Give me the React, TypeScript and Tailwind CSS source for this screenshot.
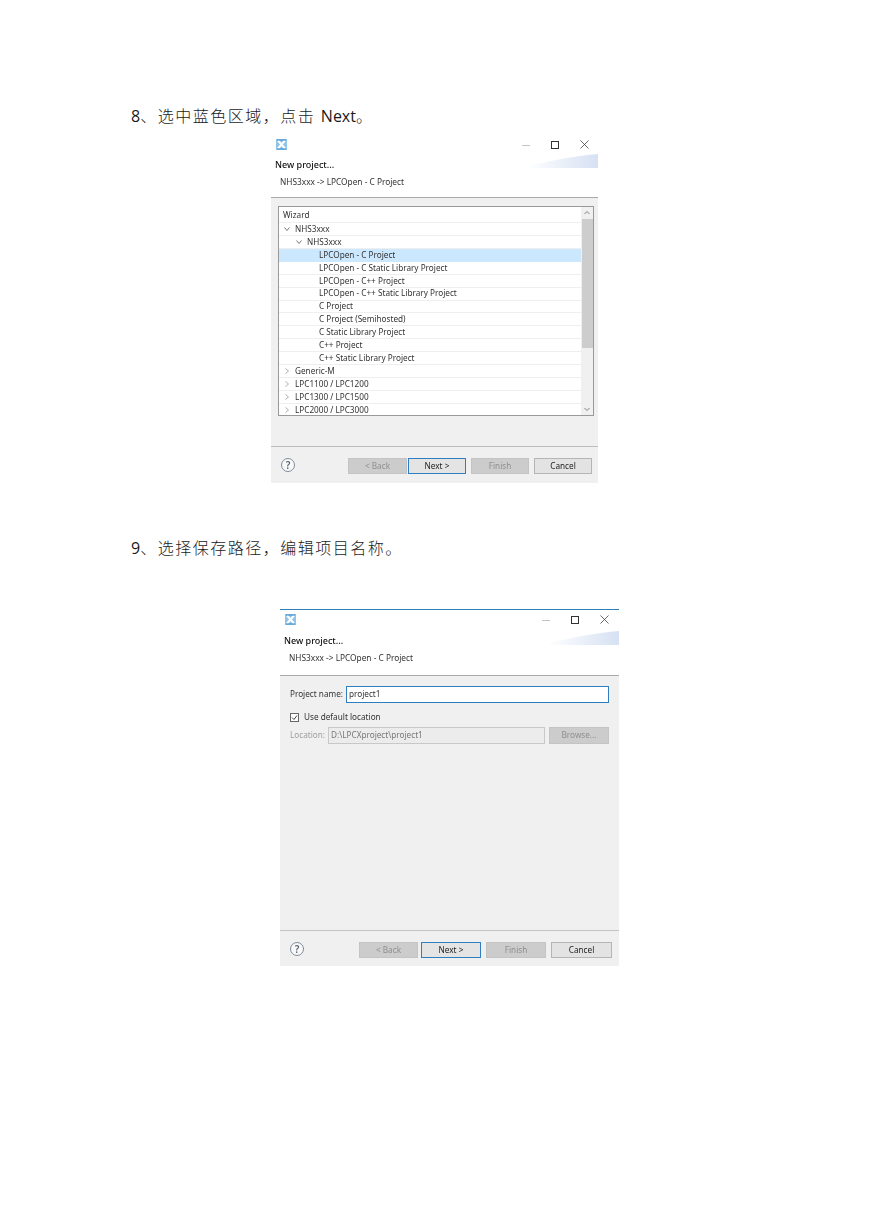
import React from "react";

const uiFont = "font-['Noto_Sans','Noto_Sans_CJK_SC',sans-serif]";

function AppIcon() {
  return (
    <svg width="11" height="11" viewBox="0 0 11 11" className="shrink-0">
      <rect width="11" height="11" fill="#8fc3e8" />
      <path d="M2 1.5 L9 9.5 M9 1.5 L2 9.5" stroke="#fff" strokeWidth="2" />
      <path d="M1 1 H10 M1 10 H10" stroke="#3f8fd0" strokeWidth="1" />
    </svg>
  );
}

function WindowControls({ gapClass }: { gapClass: string }) {
  return (
    <div className={`flex items-center ${gapClass}`}>
      <svg width="8" height="8" viewBox="0 0 8 8"><path d="M0 4.5 H8" stroke="#c4c4c4" strokeWidth="1" /></svg>
      <svg width="8" height="8" viewBox="0 0 8 8"><rect x="0.5" y="0.5" width="7" height="7" fill="none" stroke="#333" strokeWidth="1" /></svg>
      <svg width="9" height="9" viewBox="0 0 9 9"><path d="M0.5 0.5 L8.5 8.5 M8.5 0.5 L0.5 8.5" stroke="#444" strokeWidth="0.8" /></svg>
    </div>
  );
}

function Swoosh({ id, cls }: { id: string; cls: string }) {
  return (
    <svg width="90" height="14" viewBox="0 0 90 14" className={`absolute right-0 ${cls}`}>
      <defs>
        <linearGradient id={id} x1="0" x2="1" y1="0" y2="0">
          <stop offset="0.2" stopColor="#ffffff" />
          <stop offset="1" stopColor="#d6e1f3" />
        </linearGradient>
      </defs>
      <path d="M0 14 C25 13 45 4 90 0 V14 Z" fill={`url(#${id})`} />
    </svg>
  );
}

function Header({ cls, gapCls, swoosh, controls }: { cls: string; gapCls: string; swoosh: React.ReactNode; controls: React.ReactNode }) {
  return (
    <div className={`relative shrink-0 bg-white border-b border-[#a9a9a9] ${cls} ${uiFont}`}>
      {swoosh}
      <div className="flex items-center justify-between h-[19px] px-[5px]">
        <AppIcon />
        {controls}
      </div>
      <div className={`${gapCls} pl-[4px] text-[9px] leading-[12px] font-medium text-[#111]`}>New project...</div>
      <div className="mt-[5px] pl-[9px] text-[8.3px] leading-[12px] text-[#333]">NHS3xxx -&gt; LPCOpen - C Project</div>
    </div>
  );
}

function HelpIcon() {
  return (
    <div className="w-[14px] h-[14px] rounded-full border-[1.5px] border-[#7f8d9b] flex items-center justify-center text-[10px] leading-none font-semibold text-[#5a6a7a] bg-[#f8f8f8] shrink-0">
      ?
    </div>
  );
}

function Btn({ label, cls, kind }: { label: string; cls: string; kind: "off" | "on" | "plain" }) {
  const k =
    kind === "off"
      ? "bg-[#cccccc] border-[#c4c4c4] text-[#8f8f8f]"
      : kind === "on"
      ? "bg-[#e4e4e4] border-[#2f7fc0] text-[#222] border-[1.5px]"
      : "bg-[#e3e3e3] border-[#b5b5b5] text-[#222]";
  return (
    <div className={`h-[16px] border flex items-center justify-center text-[8.2px] leading-none ${k} ${cls}`}>
      {label}
    </div>
  );
}

function Chevron({ open }: { open: boolean }) {
  return (
    <svg width="6" height="6" viewBox="0 0 6 6" className="shrink-0">
      {open ? (
        <path d="M0.5 1.5 L3 4.5 L5.5 1.5" fill="none" stroke="#555" strokeWidth="0.8" />
      ) : (
        <path d="M1.5 0.5 L4.5 3 L1.5 5.5" fill="none" stroke="#9a9a9a" strokeWidth="0.8" />
      )}
    </svg>
  );
}

const rows: { t: string; level: number; open?: boolean; sel?: boolean }[] = [
  { t: "NHS3xxx", level: 0, open: true },
  { t: "NHS3xxx", level: 1, open: true },
  { t: "LPCOpen - C Project", level: 2, sel: true },
  { t: "LPCOpen - C Static Library Project", level: 2 },
  { t: "LPCOpen - C++ Project", level: 2 },
  { t: "LPCOpen - C++ Static Library Project", level: 2 },
  { t: "C Project", level: 2 },
  { t: "C Project (Semihosted)", level: 2 },
  { t: "C Static Library Project", level: 2 },
  { t: "C++ Project", level: 2 },
  { t: "C++ Static Library Project", level: 2 },
  { t: "Generic-M", level: 0, open: false },
  { t: "LPC1100 / LPC1200", level: 0, open: false },
  { t: "LPC1300 / LPC1500", level: 0, open: false },
  { t: "LPC2000 / LPC3000", level: 0, open: false },
];

function TreeRow({ t, level, open, sel }: { t: string; level: number; open?: boolean; sel?: boolean }) {
  const indent = level === 0 ? "pl-[5px]" : level === 1 ? "pl-[17px]" : "pl-[40px]";
  return (
    <div
      className={`h-[12.93px] shrink-0 flex items-center gap-[5px] border-b text-[8.2px] leading-none text-[#333] ${indent} ${
        sel ? "bg-[#cce8ff] border-[#cce8ff]" : "border-[#efefef]"
      }`}
    >
      {level < 2 && <Chevron open={!!open} />}
      <span>{t}</span>
    </div>
  );
}

function Wizard() {
  return (
    <div className={`relative w-[327px] h-[348px] ml-[271px] mt-[8px] bg-[#f0f0f0] flex flex-col blur-[0.3px] ${uiFont}`}>
      <Header
        cls="h-[63px]"
        gapCls="mt-[5px]"
        swoosh={<Swoosh id="sw1" cls="top-[19px]" />}
        controls={<WindowControls gapClass="gap-[21px] pr-[4px]" />}
      />
      <div className="mt-[8px] ml-[7px] w-[316px] h-[210px] border border-[#999999] bg-white flex overflow-hidden shrink-0">
        <div className="w-[302px] flex flex-col">
          <div className="h-[16px] shrink-0 pl-[4px] pt-[2px] flex items-center text-[8.2px] leading-none text-[#333] border-b border-[#efefef]">Wizard</div>
          {rows.map((r, i) => (
            <TreeRow key={i} {...r} />
          ))}
        </div>
        <div className="w-[12px] bg-[#f0f0f0] flex flex-col items-center">
          <div className="h-[12px] flex items-center justify-center">
            <svg width="6" height="6" viewBox="0 0 6 6"><path d="M0.5 4 L3 1.5 L5.5 4" fill="none" stroke="#666" strokeWidth="0.8" /></svg>
          </div>
          <div className="w-[11px] h-[129px] bg-[#cdcdcd]" />
          <div className="flex-1" />
          <div className="h-[12px] flex items-center justify-center">
            <svg width="6" height="6" viewBox="0 0 6 6"><path d="M0.5 2 L3 4.5 L5.5 2" fill="none" stroke="#666" strokeWidth="0.8" /></svg>
          </div>
        </div>
      </div>
      <div className="mt-[30px] border-t border-[#bdbdbd] flex items-start h-[37px] pl-[10px] pt-[11px]">
        <HelpIcon />
        <Btn label="< Back" kind="off" cls="ml-[53px] w-[59px]" />
        <Btn label="Next >" kind="on" cls="ml-[1px] w-[58px]" />
        <Btn label="Finish" kind="off" cls="ml-[5px] w-[58px]" />
        <Btn label="Cancel" kind="plain" cls="ml-[5px] w-[58px]" />
      </div>
    </div>
  );
}

function ProjectForm() {
  return (
    <div className={`relative w-[339px] h-[357px] ml-[280px] mt-[50px] bg-[#f0f0f0] border-t border-[#2f7fb8] flex flex-col blur-[0.3px] ${uiFont}`}>
      <Header
        cls="h-[66px]"
        gapCls="mt-[6px]"
        swoosh={<Swoosh id="sw2" cls="top-[21px]" />}
        controls={<WindowControls gapClass="gap-[21px] pr-[5px]" />}
      />
      <div className="mt-[10px] mx-[10px] flex items-center h-[17px] text-[8.2px] leading-none text-[#333]">
        <span className="w-[56px] shrink-0">Project name:</span>
        <div className="flex-1 h-[17px] bg-white border-[1.5px] border-[#2f7fc0] flex items-center pl-[2px]">project1</div>
      </div>
      <div className="mt-[7px] ml-[10px] flex items-center gap-[5px] h-[14px] text-[8.2px] leading-none text-[#333]">
        <div className="w-[9px] h-[9px] border border-[#666666] bg-white flex items-center justify-center">
          <svg width="7" height="7" viewBox="0 0 7 7"><path d="M1 3.5 L3 5.5 L6 1.5" fill="none" stroke="#333" strokeWidth="0.9" /></svg>
        </div>
        <span>Use default location</span>
      </div>
      <div className="mt-[3px] mx-[10px] flex items-center h-[17px] text-[8.2px] leading-none">
        <span className="w-[38px] shrink-0 text-[#a0a0a0]">Location:</span>
        <div className="w-[217px] h-[17px] bg-[#ececec] border border-[#c8c8c8] flex items-center pl-[2px] text-[#777777]">D:\LPCXproject\project1</div>
        <div className="ml-[4px] w-[60px] h-[17px] bg-[#cccccc] border border-[#c4c4c4] flex items-center justify-center text-[#8f8f8f]">Browse...</div>
      </div>
      <div className="flex-1" />
      <div className="border-t border-[#c4c4c4] flex items-start h-[36px] pl-[10px] pt-[11px]">
        <HelpIcon />
        <Btn label="< Back" kind="off" cls="ml-[55px] w-[59px]" />
        <Btn label="Next >" kind="on" cls="ml-[3px] w-[60px]" />
        <Btn label="Finish" kind="off" cls="ml-[5px] w-[60px]" />
        <Btn label="Cancel" kind="plain" cls="ml-[5px] w-[61px]" />
      </div>
    </div>
  );
}

function Heading({ children, cls }: { children: React.ReactNode; cls: string }) {
  return (
    <div className={`pl-[131px] h-[22px] flex items-center text-[16px] leading-[22px] tracking-[1.5px] font-light text-[#1a1a1a] font-['Open_Sans','Noto_Sans_CJK_SC',sans-serif] ${cls}`}>
      <span>{children}</span>
    </div>
  );
}

function Latin({ children }: { children: React.ReactNode }) {
  return <span className="tracking-normal font-normal">{children}</span>;
}

export default function App() {
  return (
    <div className="w-[869px] h-[1228px] bg-white pt-[105px] overflow-hidden">
      <Heading cls=""><Latin>8</Latin>、选中蓝色区域，点击 <Latin>Next</Latin>。</Heading>
      <Wizard />
      <Heading cls="mt-[54px]"><Latin>9</Latin>、选择保存路径，编辑项目名称。</Heading>
      <ProjectForm />
    </div>
  );
}
